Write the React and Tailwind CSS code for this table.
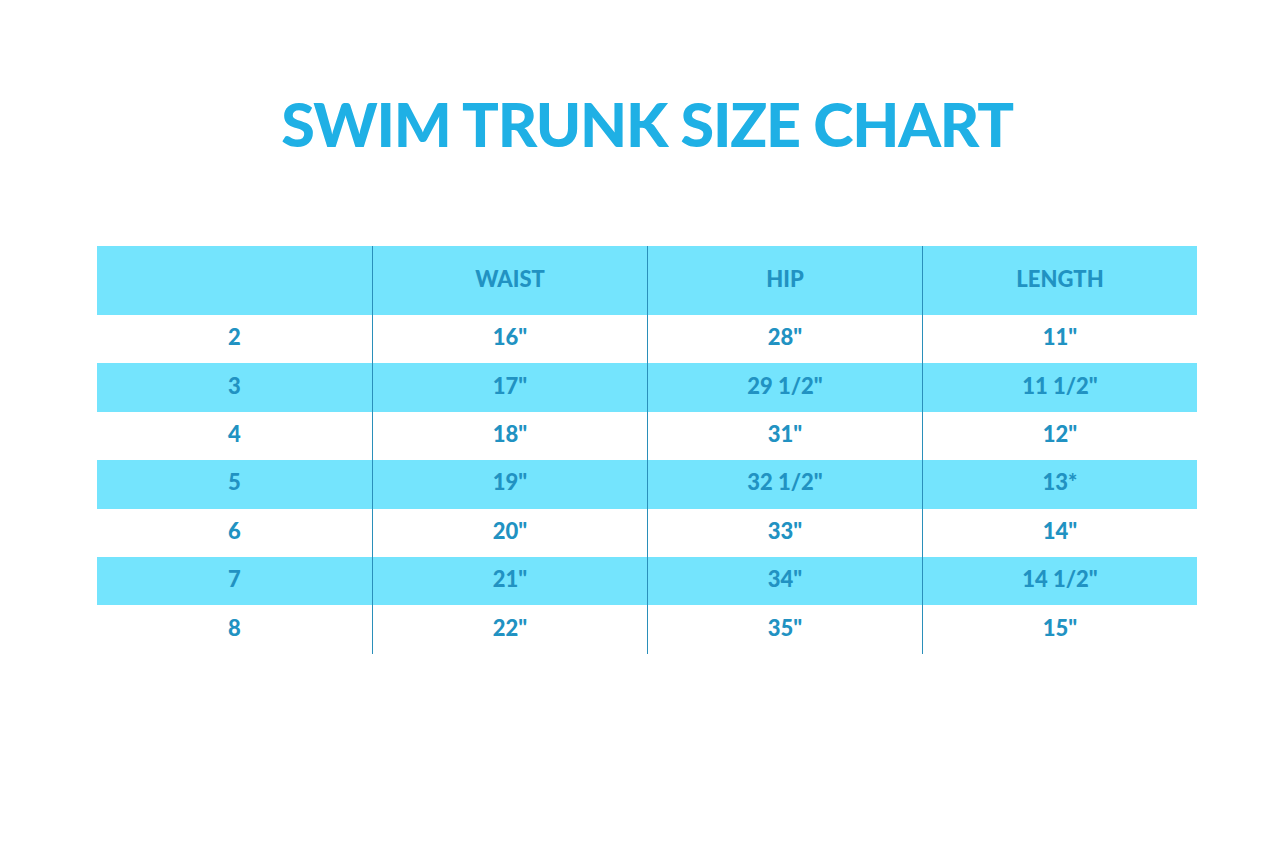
import React from "react"

const rows = [
  ["2", "16\"", "28\"", "11\""],
  ["3", "17\"", "29 1/2\"", "11 1/2\""],
  ["4", "18\"", "31\"", "12\""],
  ["5", "19\"", "32 1/2\"", "13*"],
  ["6", "20\"", "33\"", "14\""],
  ["7", "21\"", "34\"", "14 1/2\""],
  ["8", "22\"", "35\"", "15\""],
]

const Cell = ({ children, first, className = "" }) => (
  <div
    className={`flex items-center justify-center pb-[5px] ${first ? "" : "border-l border-[#2a8fba]"} ${className}`}
  >
    {children}
  </div>
)

export default function App() {
  return (
    <div
      className="w-[1284px] h-[851px] bg-white flex flex-col items-center"
      style={{ fontFamily: "Lato, 'Open Sans', sans-serif" }}
    >
      <h1 className="mt-[88px] ml-[10px] text-[61px] leading-[72px] font-black tracking-[-1.2px] text-[#1fb0e5]">
        SWIM TRUNK SIZE CHART
      </h1>

      <div className="mt-[86px] w-[1100px] ml-[10px] text-[#2192c2] font-black text-[22px]">
        <div className="grid grid-cols-4 h-[69px] bg-[#74e4fd]">
          <Cell first />
          <Cell>WAIST</Cell>
          <Cell>HIP</Cell>
          <Cell>LENGTH</Cell>
        </div>
        {rows.map((r, i) => (
          <div
            key={r[0]}
            className={`grid grid-cols-4 h-[48.4px] ${i % 2 === 1 ? "bg-[#74e4fd]" : "bg-white"}`}
          >
            {r.map((v, j) => (
              <Cell key={j} first={j === 0}>
                {v}
              </Cell>
            ))}
          </div>
        ))}
      </div>
    </div>
  )
}
